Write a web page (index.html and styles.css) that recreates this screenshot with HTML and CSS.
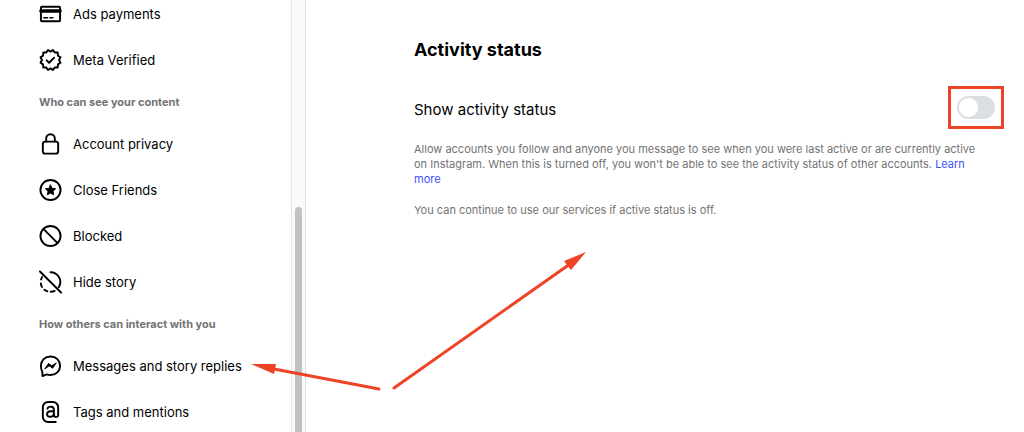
FILE: index.html
```html
<!DOCTYPE html>
<html lang="en">
<head>
    <meta charset="UTF-8">
    <meta name="viewport" content="width=device-width, initial-scale=1.0">
    <title>Activity status</title>
    <link rel="stylesheet" href="styles.css">
</head>
<body>
    <div class="page">
        <aside class="sidebar">
            <nav class="menu">
                <a href="#" class="menu-item">
                    <svg class="icon" viewBox="0 0 24 24">
                        <rect x="2" y="4.5" width="20" height="15" rx="1"></rect>
                        <path d="M2 8.8h20" stroke-width="3.6"></path>
                        <path d="M5 16h4M11.5 16h3" stroke-width="1.6"></path>
                    </svg>
                    <span>Ads payments</span>
                </a>
                <a href="#" class="menu-item">
                    <svg class="icon" viewBox="0 0 24 24">
                        <path d="M12 3.2 14.6 1.6 16.4 4.2 19.5 4.2 19.8 7.4 22.4 9.2 20.9 12 22.4 14.8 19.8 16.6 19.5 19.8 16.4 19.8 14.6 22.4 12 20.8 9.4 22.4 7.6 19.8 4.5 19.8 4.2 16.6 1.6 14.8 3.1 12 1.6 9.2 4.2 7.4 4.5 4.2 7.6 4.2 9.4 1.6Z"></path>
                        <path d="M8 12.4l2.6 2.5 5.2-5.3"></path>
                    </svg>
                    <span>Meta Verified</span>
                </a>

                <h2 class="menu-title">Who can see your content</h2>
                <a href="#" class="menu-item">
                    <svg class="icon" viewBox="0 0 24 24">
                        <rect x="4" y="9.5" width="16" height="12.500" rx="2.5"></rect>
                        <path d="M7.500 9.500V6.300a4.500 4.500 0 0 1 9 0V9.500"></path>
                    </svg>
                    <span>Account privacy</span>
                </a>
                <a href="#" class="menu-item">
                    <svg class="icon" viewBox="0 0 24 24">
                        <circle cx="12" cy="12" r="10.5"></circle>
                        <path class="solid" d="M12 6.8l1.6 3.4 3.7.5-2.7 2.6.7 3.7-3.3-1.8-3.3 1.8.7-3.7-2.7-2.6 3.7-.5z"></path>
                    </svg>
                    <span>Close Friends</span>
                </a>
                <a href="#" class="menu-item">
                    <svg class="icon" viewBox="0 0 24 24">
                        <circle cx="12" cy="12" r="10.5"></circle>
                        <path d="M4.6 4.6l14.8 14.8"></path>
                    </svg>
                    <span>Blocked</span>
                </a>
                <a href="#" class="menu-item">
                    <svg class="icon" viewBox="0 0 24 24">
                        <path d="M1 1l22 22"></path>
                        <path d="M12 1.8A10.2 10.2 0 0 1 20.6 17.5"></path>
                        <path d="M3.2 6.9a10.2 10.2 0 0 0-1 2.4M1.9 13.4a10.2 10.2 0 0 0 1.2 3.7M5.6 20a10.2 10.2 0 0 0 3.2 1.7M12.3 22.2a10.2 10.2 0 0 0 4-.9"></path>
                    </svg>
                    <span>Hide story</span>
                </a>

                <h2 class="menu-title">How others can interact with you</h2>
                <a href="#" class="menu-item">
                    <svg class="icon" viewBox="0 0 24 24">
                        <path d="M12 2c5.800 0 10 4.200 10 9.700s-4.200 9.700-10 9.700c-1.500 0-2.800-.2-4-.6L4.400 22.400c-.5.200-.8-.1-.8-.6L3.500 18.300C2.500 16.500 2 14.300 2 11.700 2 6.200 6.200 2 12 2z"></path>
                        <path class="solid" d="M6.200 14.800l3.700-5.400 3.300 2.400 4.800-3-3.800 5.600-3.300-2.500z"></path>
                    </svg>
                    <span>Messages and story replies</span>
                </a>
                <a href="#" class="menu-item">
                    <svg class="icon" viewBox="0 0 24 24">
                        <path d="M17.500 22.500H9.500A5.500 5.500 0 0 1 4 17V7a5.500 5.500 0 0 1 5.500-5.500h5A5.500 5.500 0 0 1 20 7v8.500c0 2.200-4.500 2.200-4.500-.4V9.300c0-3.700-5.900-3.700-6.700-.7"></path>
                        <path d="M15.500 11.300h-3.300c-5 0-4.700 5.700-1 5.700 2.600 0 4.300-1.500 4.300-3.500"></path>
                    </svg>
                    <span>Tags and mentions</span>
                </a>
            </nav>
            <div class="scrollbar">
                <div class="thumb"></div>
            </div>
        </aside>

        <main class="content">
            <h1>Activity status</h1>
            <div class="setting">
                <label for="activity-status">Show activity status</label>
                <span class="switch-box">
                    <input type="checkbox" id="activity-status" class="switch">
                </span>
            </div>
            <p>Allow accounts you follow and anyone you message to see when you were last active or are currently active on Instagram. When this is turned off, you won't be able to see the activity status of other accounts. <a href="#">Learn more</a></p>
            <p>You can continue to use our services if active status is off.</p>
        </main>

        <svg class="arrows" width="600" height="432" viewBox="0 0 600 432">
            <path class="line" d="M379 389L274 369M394 388L570 264"></path>
            <path class="head" d="M251 364L276 364 274 374zM586 252L564 261 567 265 571 270z"></path>
        </svg>
    </div>
</body>
</html>
```

FILE: styles.css
```css
* {
    box-sizing: border-box;
}
body {
    margin: 0;
    font-family: Inter, "Liberation Sans", sans-serif;
    background-color: #fff;
    color: #000;
}
.page {
    position: relative;
    display: flex;
    height: 100vh;
    overflow: hidden;
}
.sidebar {
    display: flex;
    flex: 0 0 306px;
}
.menu {
    flex: 1;
    display: flex;
    flex-direction: column;
    gap: 22px;
    padding: 2px 0 0 39px;
}
.menu-item {
    display: flex;
    align-items: center;
    gap: 11px;
    font-size: 13px;
    line-height: 24px;
    color: #000;
    text-decoration: none;
}
.menu-title {
    margin: 0;
    font-size: 11px;
    font-weight: 700;
    line-height: 16px;
    color: #737373;
}
.icon {
    width: 23px;
    height: 24px;
    fill: none;
    stroke: #000;
    stroke-width: 2;
    stroke-linecap: round;
    stroke-linejoin: round;
}
.icon .solid {
    fill: #000;
    stroke-width: 1;
}
.scrollbar {
    width: 15px;
    padding: 207px 3px 0;
    background-color: #fafafa;
    border-left: 1px solid #e8e8e8;
    border-right: 1px solid #e0e0e0;
}
.thumb {
    height: 100%;
    background-color: #c1c1c1;
    border-radius: 4px 4px 0 0;
}
.content {
    flex: 1;
    padding: 38px 29px 0 108px;
}
h1 {
    margin: 0 0 32px;
    font-size: 18px;
    font-weight: 700;
    line-height: 24px;
}
.setting {
    display: flex;
    justify-content: space-between;
    align-items: center;
    margin-bottom: 16px;
    font-size: 15px;
    line-height: 32px;
}
.switch-box {
    position: relative;
    display: flex;
    margin-bottom: 6px;
}
.switch-box::after {
    content: "";
    position: absolute;
    inset: -10px -9px;
    border: 3px solid #ee4326;
    pointer-events: none;
}
.switch {
    appearance: none;
    width: 38px;
    height: 23px;
    margin: 0;
    padding: 2px;
    border-radius: 12px;
    background-color: #dbdfe4;
    cursor: pointer;
}
.switch::before {
    content: "";
    display: block;
    width: 19px;
    height: 19px;
    border-radius: 50%;
    background-color: #fff;
}
.switch:checked {
    background-color: #000;
}
.switch:checked::before {
    margin-left: auto;
}
.content p {
    margin: 0 0 16px;
    padding-right: 8px;
    font-size: 11px;
    line-height: 15px;
    color: #737373;
}
.content p a {
    color: #4150f7;
    text-decoration: none;
}
.arrows {
    position: absolute;
    top: 0;
    left: 0;
    pointer-events: none;
}
.line {
    fill: none;
    stroke: #ee4326;
    stroke-width: 3;
    stroke-linecap: round;
}
.head {
    fill: #ee4326;
}
```
